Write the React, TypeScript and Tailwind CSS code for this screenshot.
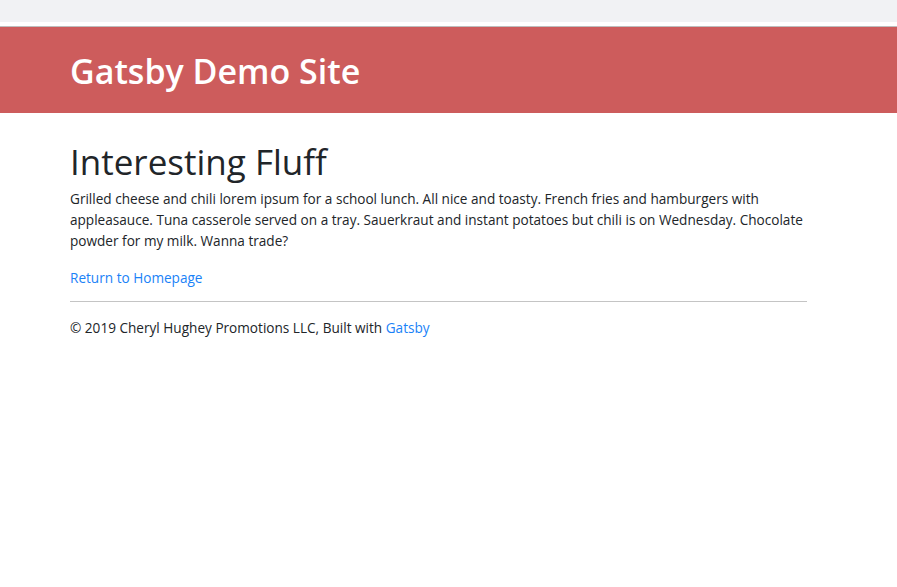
import React from "react";

const App: React.FC = () => {
  return (
    <div className="min-h-[587px] bg-white font-['Open_Sans',sans-serif] text-[#212529]">
      {/* browser-ish top strip */}
      <div className="h-[22px] bg-[#f1f2f4]" />
      <div className="h-[4px] bg-white" />
      <div className="h-px bg-[#bdbdbd]" />

      {/* Header */}
      <header className="h-[86px] bg-[#cd5c5c] flex items-center">
        <div className="ml-[70px] pt-[2px]">
          <h1 className="text-[34px] font-semibold text-white leading-none">Gatsby Demo Site</h1>
        </div>
      </header>

      {/* Content */}
      <main className="ml-[70px] w-[737px] pt-[28px]">
        <h2 className="text-[35px] font-medium leading-[1.2] mb-[5px]">Interesting Fluff</h2>
        <p className="text-[13.6px] leading-[21px] mb-[14px]">
          Grilled cheese and chili lorem ipsum for a school lunch. All nice and toasty. French fries and
          hamburgers with appleasauce. Tuna casserole served on a tray. Sauerkraut and instant potatoes
          but chili is on Wednesday. Chocolate powder for my milk. Wanna trade?
        </p>
        <a href="#" className="text-[13.6px] leading-[21px] text-[#1a82f7]">
          Return to Homepage
        </a>
        <hr className="mt-[12px] border-0 border-t border-[#c4c4c4]" />
        <footer className="pt-[15px] text-[13.6px] leading-[21px]">
          © 2019 Cheryl Hughey Promotions LLC, Built with{" "}
          <a href="#" className="text-[#1a82f7]">
            Gatsby
          </a>
        </footer>
      </main>
    </div>
  );
};

export default App;
